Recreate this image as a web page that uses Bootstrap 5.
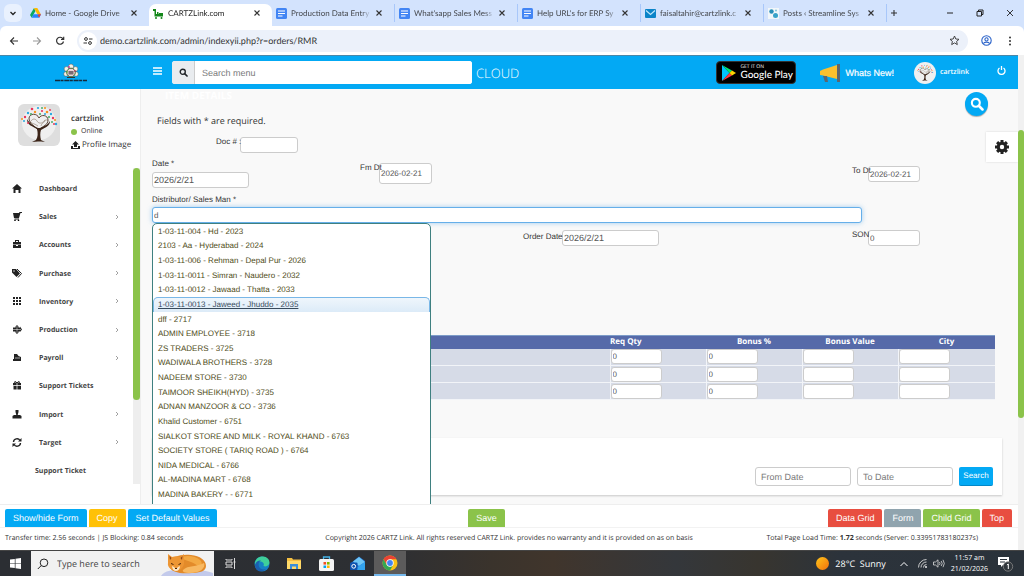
<!DOCTYPE html>
<html lang="en">
<head>
<meta charset="utf-8">
<meta name="viewport" content="width=device-width, initial-scale=1">
<title>CARTZLink.com</title>
<link href="https://cdn.jsdelivr.net/npm/bootstrap@5.3.0/dist/css/bootstrap.min.css" rel="stylesheet">
<style>
:root{--blue:#03a9f4;--green:#8bc34a;--red:#e84e40}
body{font-family:"Open Sans",sans-serif;font-size:8px;line-height:12px;color:#333;background:#fff;overflow:hidden;text-rendering:geometricPrecision}
input,button{text-rendering:inherit}
svg{display:block;flex:none}
a{color:inherit;text-decoration:none}
button{font-family:inherit}
.arial,.field,.act{font-family:"Liberation Sans",sans-serif}
/* browser chrome */
.tabstrip{height:26px;background:#d3e3fd;padding-left:4px;font-family:Lato,sans-serif}
.tab-menu{width:18px;height:18px;border:0;border-radius:6px;background:#e9f1fe;padding:0;margin-right:4px}
.tab{width:123px;height:18px;padding:0 11px 0 4px;color:#45484d}
.tab .ttl{white-space:nowrap;overflow:hidden;flex:1;min-width:0;-webkit-mask:linear-gradient(90deg,#000 88%,transparent)}
.tab.on{background:#fff;height:22px;border-radius:7px 7px 0 0;align-self:flex-end;padding-bottom:4px;color:#222}
.tab.sep{border-right:1px solid #a8c7fa}
.win-ctl{gap:22px;padding-right:10px}
.plain{border:0;background:none;padding:0;color:#333;line-height:1}
.toolbar{height:29px;background:#fff;border-radius:6px 6px 0 0;gap:13px;padding:0 9px}
.omni{height:22px;background:#ecf1fa;border-radius:11px;padding:0 8px 0 2px;margin-left:-1px}
.omni-ic{width:18px;height:18px;border-radius:50%;background:#fff;margin-right:3px}
.omni input{border:0;background:none;font-family:Lato,sans-serif;font-size:9px;color:#333;outline:0;padding:0}
/* header */
.app-head{height:34px;background:var(--blue);border-top:1px solid #4a87a8;color:#fff}
.brand-box{width:141px}
.menu-search{width:300px;height:23px;border-radius:3px;overflow:hidden;background:#fff}
.menu-search span{width:23px;background:#e9ecef;border-right:1px solid #ccc}
.menu-search input{border:0;outline:0;font-size:9px;padding:0 7px;color:#555}
::placeholder{color:#7a7a7a!important;opacity:1}
.cloud{font-size:13px;font-weight:300;line-height:18px}
.play{width:80px;height:23px;background:#000;border-radius:4px;border:1px solid #333}
.news{font-size:9px;-webkit-text-stroke:.2px #fff}
/* sidebar */
.side{width:141px;background:#fff;border-right:1px solid #eee}
.side-nav{height:310px;margin-top:25px}
.side-nav a{flex:1;padding:0 20px 0 12px;color:#444;font-weight:700;font-size:7px}
.side-nav svg{margin-bottom:3px}
.side-nav .lbl{margin-left:17px;flex:1}
.bar-track{background:#eee}
.bar-thumb{background:var(--green);border-radius:4px}
/* form */
.content-pane{background:#f9f9f9;padding:0 16px 9px 11px}
.field{height:16px;border:1px solid #ccc;border-radius:3px;background:#fff;color:#555;font-size:9px;padding:0 1px;outline:0;min-width:0}
.field.sm{font-size:8px}
.lab{font-family:"Liberation Sans",sans-serif;white-space:nowrap;line-height:14px;display:block;position:relative;z-index:1}
.date-row{display:grid;grid-template-columns:208px 1fr 150px;margin-top:4px}
.order-row{display:grid;grid-template-columns:371px 1fr 150px;margin-top:5px;height:18px}
.pair{display:flex;align-items:flex-start}
.pair .field{margin-top:2px}
.focus-field{border-color:#66afe9;box-shadow:0 0 5px rgba(102,175,233,.6);width:710px}
.suggest{position:absolute;top:100%;left:0;width:279px;height:300px;border:1px solid #3f8080;border-radius:5px 5px 0 0;background:#fff;z-index:3;margin:0}
.suggest ul{height:278px;list-style:none;margin:0;padding:0}
.suggest li{flex:1;min-height:0;display:flex;align-items:center;padding-left:4px;color:#4e4b17;border:1px solid transparent;border-bottom:0;white-space:nowrap;line-height:12px}
.suggest li.hot{border-color:#79b7e7;border-radius:5px 5px 0 0;background:linear-gradient(#eff6fc,#dcebf8);color:#374a5c;text-decoration:underline}
.grid-table{margin:89px 7px 0 0;table-layout:fixed;border-collapse:collapse}
.grid-table th{background:#566aa9;color:#fff;height:13px;padding:0;font-size:8px;line-height:12px;text-align:center;border-top:1px solid #7d9cc8}
.grid-table th.first{text-align:left}
.grid-table td{background:#d6dbe7;height:17px;padding:0;border-left:1px solid #f2f4f8;border-bottom:1px solid #f2f4f8;line-height:0;vertical-align:middle}
.grid-table .field{width:51px;height:15px;font-size:8px}
.filter{background:#fff;margin-top:38px;padding:29px 9px 9px;gap:6px;box-shadow:0 1px 2px rgba(0,0,0,.2)}
.filter .field{width:96px;height:19px;font-size:9px;padding:0 5px}
.act{border:0;color:#fff;font-size:9px;line-height:18px;height:18px;padding:0 8px;border-radius:2px 2px 0 0;white-space:nowrap}
.act.srch{font-size:8px;height:19px;border-radius:2px;padding:0 4px;width:34px;border-bottom:1px solid #0388c8}
.bl{background:var(--blue)}.ye{background:#ffc107}.gr{background:var(--green)}.gy{background:#90a4ae}.re{background:var(--red)}
.round-btn{position:absolute;right:30px;top:3px;width:23px;height:24px;border-radius:50%;background:var(--blue);border:0;padding:0;box-shadow:0 1px 1px rgba(0,0,0,.3)}
.gear-btn{position:absolute;right:0;top:43px;width:32px;height:30px;background:#fff;border:0;padding:0;box-shadow:0 0 2px rgba(0,0,0,.15)}
.actions{height:23px;border-top:1px solid #eee;gap:2px;padding:0 6px 0 5px}
.foot{height:23px;border-top:1px solid #f2f2f2;font-size:7px;padding:0 5px}
.third{flex:1 1 0;min-width:0}
/* taskbar */
.task{height:26px;background:linear-gradient(90deg,#2b2e33 0,#2d2f33 38%,#3a332c 48%,#40352c 54%,#34373b 66%,#38352f 74%,#2c333b 82%,#2a323a 100%);border-top:1px solid #444;color:#fff}
.task-search{width:183px;background:#f1f1f1;padding-left:6px;overflow:hidden}
.task-search input{border:0;background:none;outline:0;width:104px;font-size:9px;padding:0;color:#444}
.task-search input::placeholder{color:#444!important}
.tb{width:32px;border:0;background:none;padding:0;display:flex;align-items:center;justify-content:center;height:100%}
.tb.on{background:#5c5b5b;border-bottom:2px solid #76b9ed}
.tray{gap:6px;font-size:9px;padding-right:10px}
.clock{font-size:7px;line-height:11px}
</style>
</head>
<body class="vh-100 d-flex flex-column">
<svg width="0" height="0" class="position-absolute" aria-hidden="true">
  <symbol id="x" viewBox="0 0 8 8"><path d="M1.500 1.500l5 5M6.500 1.500l-5 5" stroke="#333" stroke-width="1.100"/></symbol>
  <symbol id="doc" viewBox="0 0 11 11"><rect width="11" height="11" rx="1.500" fill="#4285f4"/><path d="M2 3h7M2 5.500h7M2 8h4.500" stroke="#fff" stroke-width="1.200"/></symbol>
  <symbol id="mag" viewBox="0 0 12 12"><circle cx="5" cy="5" r="3.400" fill="none" stroke="currentColor" stroke-width="1.800"/><path d="M7.500 7.500l3.200 3.200" stroke="currentColor" stroke-width="2.200" stroke-linecap="round"/></symbol>
  <symbol id="chev" viewBox="0 0 6 6"><path d="M2 1l2 2-2 2" fill="none" stroke="#888" stroke-width=".8"/></symbol>
  <symbol id="tree" viewBox="0 0 42 42">
    <path d="M20 26C17 22 11 20 11 14c1-5 8-5 10 0 2-4 9-3 9 2 0 5-5 6-8 9" fill="none" stroke="#5a4434" stroke-width="1"/>
    <path d="M9 15c0 6 5 7 10 10 1 4 1 8-1 11l-4 2 6-.5h3l4 .5-4-2c-1-4-1-7 0-10 5-3 9-4 9-9-2 4-6 5-10 7h-2c-4-2-8-4-11-9z" fill="#3b2418"/>
    <path d="M13 17c2-3 5-2 6 0s4 3 6 1 4-3 5-1M20 22c-4-3-7-2-8-5M23 22c1-4 4-3 4-6" fill="none" stroke="#8a7768" stroke-width=".6"/>
    <g fill="#e9365b"><circle cx="7" cy="13" r="1.200"/><circle cx="14" cy="5" r="1.300"/><circle cx="24" cy="7" r="1.100"/><circle cx="35" cy="14" r="1.200"/><circle cx="10" cy="19" r="1"/><circle cx="32" cy="6" r="1"/><circle cx="36" cy="20" r="1"/></g>
    <g fill="#29a8e0"><circle cx="10" cy="9" r="1.200"/><circle cx="20" cy="4" r="1.100"/><circle cx="33" cy="10" r="1.200"/><circle cx="38" cy="20" r="1.200"/><circle cx="6" cy="17" r="1"/><circle cx="27" cy="10" r="1"/></g>
    <g fill="#f7941d"><circle cx="17" cy="8" r="1.200"/><circle cx="29" cy="8" r="1.300"/><circle cx="37" cy="16" r="1.100"/><circle cx="4" cy="15" r="1"/><circle cx="27" cy="4" r="1.100"/></g>
    <g fill="#4caf6d"><circle cx="13" cy="10" r="1.100"/><circle cx="22" cy="10" r="1.100"/><circle cx="31" cy="13" r="1.100"/><circle cx="34" cy="18" r="1"/><circle cx="24" cy="4" r="1"/></g>
  </symbol>
</svg>

<!-- browser tabs -->
<div class="tabstrip d-flex align-items-center flex-shrink-0">
  <button class="tab-menu d-flex align-items-center justify-content-center" aria-label="Tabs"><svg width="8" height="8"><path d="M1.500 3L4 5.500 6.500 3" fill="none" stroke="#222" stroke-width="1.300"/></svg></button>
  <div class="tab d-flex align-items-center gap-1"><svg width="11" height="10" viewBox="0 0 11 10"><path d="M4 0L0 7l1.700 2.800L5.500 3z" fill="#0da960"/><path d="M4 0h3.300l3.500 6.300H7.300z" fill="#ffba00"/><path d="M3.500 6.300H11L9.200 9.800H1.700z" fill="#2684fc"/><path d="M9 6.300h2L9.200 9.800 7.500 7z" fill="#ea4335"/></svg><span class="ttl">Home - Google Drive</span><button class="plain" aria-label="Close"><svg width="8" height="8"><use href="#x"/></svg></button></div>
  <div class="tab on d-flex align-items-center gap-1"><svg width="11" height="11" viewBox="0 0 11 11"><path d="M0 1h3v5h7v2.500H1.500V3H0z" fill="#14871b"/><path d="M4 4h1.500v2H4zM6 5h4v2H6z" fill="#14871b"/><circle cx="3" cy="10" r="1" fill="#14871b"/><circle cx="8.500" cy="10" r="1" fill="#14871b"/></svg><span class="ttl">CARTZLink.com</span><button class="plain" aria-label="Close"><svg width="8" height="8"><use href="#x"/></svg></button></div>
  <div class="tab sep d-flex align-items-center gap-1"><svg width="11" height="11"><use href="#doc"/></svg><span class="ttl">Production Data Entry</span><button class="plain" aria-label="Close"><svg width="8" height="8"><use href="#x"/></svg></button></div>
  <div class="tab sep d-flex align-items-center gap-1"><svg width="11" height="11"><use href="#doc"/></svg><span class="ttl">What'sapp Sales Mess</span><button class="plain" aria-label="Close"><svg width="8" height="8"><use href="#x"/></svg></button></div>
  <div class="tab sep d-flex align-items-center gap-1"><svg width="11" height="11"><use href="#doc"/></svg><span class="ttl">Help URL's for ERP Sy</span><button class="plain" aria-label="Close"><svg width="8" height="8"><use href="#x"/></svg></button></div>
  <div class="tab sep d-flex align-items-center gap-1"><svg width="11" height="9"><rect width="11" height="9" rx="1" fill="#0b84c8"/><path d="M1 1.500l4.500 4 4.500-4" fill="none" stroke="#bfe6fa" stroke-width="1.200"/></svg><span class="ttl">faisaltahir@cartzlink.c</span><button class="plain" aria-label="Close"><svg width="8" height="8"><use href="#x"/></svg></button></div>
  <div class="tab sep d-flex align-items-center gap-1"><svg width="11" height="11"><rect width="11" height="11" fill="#f2f7fa"/><circle cx="3.500" cy="3.500" r="2.200" fill="#2a8fb8"/><circle cx="7.500" cy="7.500" r="2.500" fill="#39a3c9"/><circle cx="8" cy="2.500" r="1" fill="#7fc4dc"/></svg><span class="ttl">Posts ‹ Streamline Sys</span><button class="plain" aria-label="Close"><svg width="8" height="8"><use href="#x"/></svg></button></div>
  <button class="plain" aria-label="New tab"><svg width="10" height="10" class="ms-1"><path d="M3 2v6M0 5h6" stroke="#333" stroke-width="1.100"/></svg></button>
  <div class="win-ctl d-flex ms-auto align-items-center">
    <button class="plain" aria-label="Minimize"><svg width="8" height="8"><path d="M1 4h6" stroke="#222" stroke-width="1"/></svg></button>
    <button class="plain" aria-label="Restore"><svg width="8" height="8"><path d="M1 2.500h4.500V7H1zM2.500 2.500V1H7v4.500H5.500" fill="none" stroke="#222"/></svg></button>
    <button class="plain" aria-label="Close window"><svg width="8" height="8"><path d="M1 1l6 6M7 1L1 7" stroke="#222" stroke-width=".9"/></svg></button>
  </div>
</div>
<div style="background:#d3e3fd" class="flex-shrink-0">
<div class="toolbar d-flex align-items-center">
  <button class="plain" aria-label="Back"><svg width="10" height="10"><path d="M9 5H1.500M5 1.500L1.500 5 5 8.500" fill="none" stroke="#333" stroke-width="1.100"/></svg></button>
  <button class="plain" aria-label="Forward"><svg width="10" height="10"><path d="M1 5h7.500M5 1.500L8.500 5 5 8.500" fill="none" stroke="#999" stroke-width="1.100"/></svg></button>
  <button class="plain" aria-label="Reload"><svg width="10" height="10"><path d="M8 2.800A3.500 3.500 0 1 0 8.500 5.500M8.700.8v2.700H6" fill="none" stroke="#333" stroke-width="1.200"/></svg></button>
  <form class="omni d-flex align-items-center flex-grow-1">
    <span class="omni-ic d-flex align-items-center justify-content-center"><svg width="10" height="10"><path d="M6 3h3.500M.5 7H4" stroke="#333" stroke-width="1.200"/><circle cx="3" cy="3" r="1.400" fill="none" stroke="#333"/><circle cx="7" cy="7" r="1.400" fill="none" stroke="#333"/></svg></span>
    <input class="flex-grow-1" type="text" aria-label="Address" value="demo.cartzlink.com/admin/indexyii.php?r=orders/RMR">
    <svg width="11" height="11"><path d="M5.500 1l1.300 3 3.200.3-2.400 2.100.7 3.200-2.800-1.700-2.800 1.700.7-3.200L1 4.300 4.200 4z" fill="none" stroke="#333" stroke-width=".9"/></svg>
  </form>
  <button class="plain" aria-label="Profile"><svg width="11" height="11"><g fill="none" stroke="#2a62c9" stroke-width="1.100"><circle cx="5.500" cy="5.500" r="4.700"/><circle cx="5.500" cy="4.400" r="1.600"/><path d="M2.400 8.600c1-2 5.200-2 6.200 0"/></g></svg></button>
  <button class="plain" aria-label="Menu"><svg width="10" height="10"><g fill="#333"><circle cx="5" cy="1.500" r="1"/><circle cx="5" cy="5" r="1"/><circle cx="5" cy="8.500" r="1"/></g></svg></button>
</div>
</div>

<!-- application -->
<div class="d-flex flex-grow-1" style="min-height:0">
<div class="d-flex flex-column flex-grow-1" style="min-width:0">
  <header class="app-head d-flex align-items-center flex-shrink-0">
    <div class="brand-box d-flex justify-content-center">
      <svg width="34" height="20" viewBox="0 0 34 20" role="img" aria-label="Logo"><g fill="#f4f4e8" stroke="#555" stroke-width=".5"><circle cx="17" cy="3.500" r="2.500"/><circle cx="12.500" cy="6" r="2.400"/><circle cx="21.500" cy="6" r="2.400"/><circle cx="12" cy="11" r="2.300"/><circle cx="22" cy="11" r="2.300"/></g><circle cx="17" cy="9.500" r="4.300" fill="#ead6dc" stroke="#486b33" stroke-width="1"/><path d="M14.500 8h5v3.500h-5z" fill="#7b6a73"/><circle cx="15" cy="4" r=".9" fill="#d0339c"/><circle cx="13" cy="9" r=".8" fill="#4caf30"/><circle cx="21" cy="8" r=".8" fill="#c2185b"/><path d="M13 14.500h8" stroke="#333"/><path d="M1 17.500h32" stroke="#142a3c" stroke-width="1.700" stroke-dasharray="5 .5 3 .8"/></svg>
    </div>
    <button class="plain ms-2 ps-1 pb-1" aria-label="Toggle menu"><svg width="9" height="8"><path d="M0 1h9M0 4h9M0 7h9" stroke="#fff" stroke-width="1.300"/></svg></button>
    <form class="menu-search d-flex" style="margin-left:10px"><span class="d-flex align-items-center justify-content-center text-dark"><svg width="9" height="9"><use href="#mag"/></svg></span><input class="arial flex-grow-1" type="search" placeholder="Search menu" aria-label="Search menu"></form>
    <span class="cloud ms-1">CLOUD</span>
    <a href="#" class="play d-flex align-items-center ms-auto ps-1 gap-1 text-white">
      <svg width="15" height="16" viewBox="0 0 15 16"><path d="M1 0v16l7.500-8z" fill="#00c3ff"/><path d="M1 0l10 5.500L8.500 8z" fill="#00e676"/><path d="M1 16l10-5.500L8.500 8z" fill="#ff3a44"/><path d="M11 5.500L15 8l-4 2.500L8.500 8z" fill="#ffd500"/></svg>
      <span class="d-flex flex-column"><span style="font-size:5px;line-height:6px">GET IT ON</span><span style="font:500 10px/11px Lato,sans-serif">Google Play</span></span>
    </a>
    <a href="#" class="news d-flex align-items-center arial text-white gap-1 ms-4"><svg width="21" height="20" viewBox="0 0 21 20"><path d="M0 8l3-1.500L17 2v14L3 12.500 0 12z" fill="#fbc02d"/><path d="M17 1h3v18h-3z" fill="#5b6670"/><path d="M3 13h4l1 6H5z" fill="#5b6670"/></svg>Whats New!</a>
    <a href="#" class="d-flex align-items-center text-white gap-1" style="font-weight:600;font-size:7px;margin-left:20px"><svg width="22" height="22" viewBox="0 0 42 42"><circle cx="21" cy="21" r="21" fill="#f0f0f0"/><use href="#tree" x="3" y="2" width="36" height="38"/></svg>cartzlink</a>
    <button class="plain ms-4 me-2 ps-1 pe-1 pb-1" aria-label="Log out"><svg width="9" height="9"><path d="M2.500 2A3.500 3.500 0 1 0 6.500 2M4.500 0v4" fill="none" stroke="#fff" stroke-width="1.300"/></svg></button>
  </header>

  <div class="d-flex flex-grow-1 overflow-hidden" style="min-height:0">
    <aside class="side position-relative flex-shrink-0 overflow-hidden">
      <div class="d-flex" style="padding:15px 0 0 18px">
        <svg width="42" height="42" viewBox="0 0 42 42"><rect width="42" height="42" rx="6" fill="#dedede"/><circle cx="21" cy="19" r="17" fill="#efefef"/><use href="#tree"/></svg>
        <div class="ms-2" style="padding:8px 0 0 3px;line-height:13px;white-space:nowrap">
          <div style="font-weight:600">cartzlink</div>
          <div class="d-flex align-items-center" style="font-size:7px"><svg width="6" height="6" class="me-1"><circle cx="3" cy="3" r="3" fill="#8bc34a"/></svg>Online</div>
          <a href="#" class="d-flex align-items-center" style="gap:2px"><svg width="9" height="8"><path d="M4.500 0L8 3.500H6V6H3V3.500H1zM0 5h2v2h5V5h2v3H0z" fill="#222"/></svg>Profile Image</a>
        </div>
      </div>
      <nav class="side-nav d-flex flex-column">
        <a href="#" class="d-flex align-items-center"><svg width="10" height="9"><path d="M5 0l5 4.500H8.500V9h-2V6h-3v3h-2V4.500H0z" fill="#222"/></svg><span class="lbl">Dashboard</span></a>
        <a href="#" class="d-flex align-items-center"><svg width="10" height="9"><path d="M1 1h6l.5-1H10v1H8.500L7 6H2zM2.500 6.500H7v1h-4.500z" fill="#222"/><circle cx="3" cy="8.300" r=".8"/><circle cx="6.500" cy="8.300" r=".8"/></svg><span class="lbl">Sales</span><svg width="6" height="6"><use href="#chev"/></svg></a>
        <a href="#" class="d-flex align-items-center"><svg width="10" height="9"><path d="M3 0h4v2h2v2.500H1V2h2zm1 1v1h2V1zM1 5h3v1h2V5h3v3H1z" fill="#222" fill-rule="evenodd"/></svg><span class="lbl">Accounts</span><svg width="6" height="6"><use href="#chev"/></svg></a>
        <a href="#" class="d-flex align-items-center"><svg width="10" height="9"><path d="M0 0h4l4 4.500L4.500 8 0 3.500z" fill="#222"/><path d="M5 0l4.500 4.500L6 8.500" fill="none" stroke="#222"/><circle cx="2" cy="2" r=".7" fill="#fff"/></svg><span class="lbl">Purchase</span><svg width="6" height="6"><use href="#chev"/></svg></a>
        <a href="#" class="d-flex align-items-center"><svg width="10" height="9"><path d="M1 0h2v2H1zm3 0h2v2H4zm3 0h2v2H7zM1 3h2v2H1zm3 0h2v2H4zm3 0h2v2H7zM1 6h2v2H1zm3 0h2v2H4zm3 0h2v2H7z" fill="#222"/></svg><span class="lbl">Inventory</span><svg width="6" height="6"><use href="#chev"/></svg></a>
        <a href="#" class="d-flex align-items-center"><svg width="10" height="9"><path d="M5 0l1.500 1.500V2.500H8V1.500L10 4.500 8 7V6.500H6.500v1L5 9 3.500 7.500v-1H1v-4h2.500v-1z" fill="#222"/><path d="M1 4.500h8M5 1v7" stroke="#fff" stroke-width=".5"/></svg><span class="lbl">Production</span><svg width="6" height="6"><use href="#chev"/></svg></a>
        <a href="#" class="d-flex align-items-center"><svg width="10" height="9"><path d="M2 1h3l1.500 2L9 4v4H1V6h1z" fill="#222"/><path d="M3 5h5" stroke="#fff" stroke-width=".6"/></svg><span class="lbl">Payroll</span><svg width="6" height="6"><use href="#chev"/></svg></a>
        <a href="#" class="d-flex align-items-center"><svg width="10" height="9"><path d="M1 2h8v2.200H1zM1.500 5H9v3.500H1.500z" fill="#222"/><path d="M5 2C3-1 1.500 1.500 3 2h4C8.500 1.500 7-1 5 2z" fill="none" stroke="#222"/><path d="M5 2v7" stroke="#fff" stroke-width=".7"/></svg><span class="lbl">Support Tickets</span></a>
        <a href="#" class="d-flex align-items-center"><svg width="10" height="9"><path d="M3.500 0h3v2l-.8 3H8L9.500 6v2.500h-9V6L2 5h2.300l-.8-3z" fill="#222"/></svg><span class="lbl">Import</span><svg width="6" height="6"><use href="#chev"/></svg></a>
        <a href="#" class="d-flex align-items-center"><svg width="10" height="9"><path d="M1.500 4A3.500 3.500 0 0 1 8 2.500M8.500 5A3.500 3.500 0 0 1 2 6.500" fill="none" stroke="#222" stroke-width="1.400"/><path d="M9.500 0v3.500H6zM.5 9V5.500H4z" fill="#222"/></svg><span class="lbl">Target</span><svg width="6" height="6"><use href="#chev"/></svg></a>
        <a href="#" class="d-flex align-items-center" style="padding-left:35px">Support Ticket</a>
      </nav>
      <div class="bar-track position-absolute end-0" style="top:79px;width:7px;height:316px"><div class="bar-thumb" style="height:232px"></div></div>
    </aside>

    <main class="content-pane position-relative flex-grow-1" style="min-width:0">
      <h1 class="text-white fw-bold m-0" style="font-size:10px;line-height:13px;padding-left:13px">ITEM DETAILS</h1>
      <p class="mb-0" style="font-size:9px;line-height:14px;margin:12px 0 0 5px">Fields with * are required.</p>
      <div class="pair" style="margin:7px 0 0 64px"><label class="lab" for="docno" style="width:24px">Doc # :</label><input id="docno" class="field" style="width:58px"></div>
      <div class="date-row">
        <div><label class="lab" for="dt">Date *</label><input id="dt" class="field d-block" style="width:97px;margin-top:1px" value="2026/2/21"></div>
        <div class="pair pt-1"><label class="lab" for="fm" style="width:19px">Fm Dt</label><input id="fm" class="field sm" style="width:53px;height:21px" value="2026-02-21"></div>
        <div class="pair" style="padding-top:7px"><label class="lab" for="to" style="width:16px">To Dt</label><input id="to" class="field sm" style="width:52px" value="2026-02-21"></div>
      </div>
      <div class="position-relative" style="margin-top:5px">
        <label class="lab" for="dist">Distributor/ Sales Man *</label>
        <input id="dist" class="field sm focus-field d-block" value="d">
        <div class="suggest arial">
          <ul class="d-flex flex-column">
            <li>1-03-11-004 - Hd - 2023</li><li>2103 - Aa - Hyderabad - 2024</li><li>1-03-11-006 - Rehman - Depal Pur - 2026</li><li>1-03-11-0011 - Simran - Naudero - 2032</li><li>1-03-11-0012 - Jawaad - Thatta - 2033</li><li class="hot">1-03-11-0013 - Jaweed - Jhuddo - 2035</li><li>dff - 2717</li><li>ADMIN EMPLOYEE - 3718</li><li>ZS TRADERS - 3725</li><li>WADIWALA BROTHERS - 3728</li><li>NADEEM STORE - 3730</li><li>TAIMOOR SHEIKH(HYD) - 3735</li><li>ADNAN MANZOOR &amp; CO - 3736</li><li>Khalid Customer - 6751</li><li>SIALKOT STORE AND MILK - ROYAL KHAND - 6763</li><li>SOCIETY STORE ( TARIQ ROAD ) - 6764</li><li>NIDA MEDICAL - 6766</li><li>AL-MADINA MART - 6768</li><li>MADINA BAKERY - - 6771</li>
          </ul>
        </div>
      </div>
      <div class="order-row">
        <div></div>
        <div class="pair"><label class="lab" for="od" style="width:39px;margin-top:2px">Order Date</label><input id="od" class="field" style="width:97px" value="2026/2/21"></div>
        <div class="pair"><label class="lab" for="son" style="width:16px">SON</label><input id="son" class="field sm" style="width:52px" value="0"></div>
      </div>
      <table class="grid-table" style="width:calc(100% - 7px)">
        <colgroup><col><col style="width:96px"><col style="width:96px"><col style="width:96px"><col style="width:97px"></colgroup>
        <thead><tr><th></th><th class="first">Req Qty</th><th>Bonus %</th><th>Bonus Value</th><th>City</th></tr></thead>
        <tbody>
          <tr><td></td><td><input class="field" aria-label="Req Qty" value="0"></td><td><input class="field" aria-label="Bonus %" value="0"></td><td><input class="field" aria-label="Bonus Value"></td><td><input class="field" aria-label="City"></td></tr>
          <tr><td></td><td><input class="field" aria-label="Req Qty" value="0"></td><td><input class="field" aria-label="Bonus %" value="0"></td><td><input class="field" aria-label="Bonus Value"></td><td><input class="field" aria-label="City"></td></tr>
          <tr><td></td><td><input class="field" aria-label="Req Qty" value="0"></td><td><input class="field" aria-label="Bonus %" value="0"></td><td><input class="field" aria-label="Bonus Value"></td><td><input class="field" aria-label="City"></td></tr>
        </tbody>
      </table>
      <form class="filter d-flex justify-content-end">
        <input class="field" placeholder="From Date" aria-label="From Date"><input class="field" placeholder="To Date" aria-label="To Date"><button type="button" class="act srch bl">Search</button>
      </form>
      <button class="round-btn d-flex align-items-center justify-content-center text-white" aria-label="Search"><svg width="14" height="14"><use href="#mag"/></svg></button>
      <button class="gear-btn d-flex align-items-center justify-content-center" aria-label="Settings"><svg width="14" height="14" viewBox="-7 -7 14 14"><circle r="3.700" fill="none" stroke="#222" stroke-width="3"/><path d="M0-7V-4M0 7V4M-7 0h3M7 0H4M-4.900-4.900l2 2M4.900 4.900l-2-2M-4.900 4.900l2-2M4.900-4.900l-2 2" stroke="#222" stroke-width="3"/></svg></button>
    </main>
  </div>

  <div class="actions d-flex align-items-end flex-shrink-0 bg-white">
    <div class="third d-flex" style="gap:2px"><button class="act bl">Show/hide Form</button><button class="act ye">Copy</button><button class="act bl">Set Default Values</button></div>
    <button class="act gr">Save</button>
    <div class="third d-flex justify-content-end" style="gap:2px;margin-left:44px"><button class="act re">Data Grid</button><button class="act gy">Form</button><button class="act gr">Child Grid</button><button class="act re">Top</button></div>
  </div>
  <footer class="foot d-flex align-items-center justify-content-between flex-shrink-0 bg-white">
    <span class="third">Transfer time: 2.56 seconds | JS Blocking: 0.84 seconds</span>
    <span>Copyright 2026 CARTZ Link. All rights reserved CARTZ Link. provides no warranty and it is provided on as on basis</span>
    <span class="third text-end"><span class="d-block" style="padding-right:35px">Total Page Load Time: <b>1.72</b> seconds (Server: 0.33951783180237s)</span></span>
  </footer>
</div>
<div class="bar-track flex-shrink-0" style="width:6px;padding-top:75px;background:#f1f1f1"><div class="bar-thumb" style="height:288px"></div></div>
</div>

<!-- desktop taskbar -->
<div class="task d-flex align-items-center flex-shrink-0">
  <button class="tb" aria-label="Start" style="width:31px"><svg width="11" height="11"><path d="M0 1.500L4.800 1v4.200H0zM5.500.8L11 0v5.200H5.500zM0 5.800h4.800V10L0 9.500zM5.500 5.800H11V11l-5.500-.8z" fill="#fff"/></svg></button>
  <div class="task-search d-flex align-items-center h-100">
    <svg width="12" height="12" class="me-1"><circle cx="7" cy="4.800" r="3.800" fill="none" stroke="#222"/><path d="M4.300 7.500L.8 11" stroke="#222"/></svg>
    <input class="ms-1" type="search" placeholder="Type here to search" aria-label="Type here to search">
    <svg width="52" height="25" viewBox="0 0 52 25"><path d="M0 25c3-5 12-7 24-7s22 2 28 4v3z" fill="#c3caeb"/><path d="M8 14C10 5 20 3 30 4c9 1 15 5 15 11 0 5-6 7-14 7-10 1-22 0-23-8z" fill="#e38b2a"/><path d="M17 7c6-3 17-3 22 2 3 3 2 6-1 7-5-5-13-7-21-9z" fill="#f3a943"/><path d="M22 19c5-5 14-3 21-7 2 5-4 10-14 10-5 0-8-1-7-3z" fill="#f8b962"/><path d="M7 3l4 3c3-1 5-1 8 0l4-3v9c0 4-4 8-8 8s-9-4-8-8z" fill="#ed9634"/><path d="M8.500 5l2 2-1.500 2zM21.500 5l-2 2 1.500 2z" fill="#8c4516"/><path d="M11 15l2 1 2 2 2-2 2-1c0 3-2 5-4 5s-4-2-4-5z" fill="#fde6c3"/><path d="M10 12.500l2.500 1M20 12.500l-2.500 1M14 17.500h2" stroke="#4a250b" stroke-width="1"/></svg>
  </div>
  <button class="tb" aria-label="Task view"><svg width="11" height="11"><path d="M1 1v1h6V1M1 4h6v3H1zM1 10V9h6v1M9.500 0v11M8.500 4h2" fill="none" stroke="#ddd"/></svg></button>
  <button class="tb" aria-label="Edge"><svg width="16" height="16"><circle cx="8" cy="8" r="7.500" fill="#1681c4"/><path d="M1 6.500C2 2 6 .5 9 .6c4 .2 6.500 3 6.500 6 0 3-3 4.500-6 3.500 1-2 0-4-2.500-4.500S2 6 1 9z" fill="#3fcf9a"/><path d="M1 9c1-4 4-5 6-4.500-2 1-3 3-2 6 1 2.500 4 3.500 7 2.500-3 3.500-11 3.500-11-4z" fill="#1b5fae"/></svg></button>
  <button class="tb" aria-label="File Explorer"><svg width="14" height="13"><path d="M0 1h5l1 1.500h8V12H0z" fill="#f5c042"/><path d="M0 4h14v8H0z" fill="#ffd968"/><path d="M3 7h8v5H9V9.500H5V12H3z" fill="#3a8ed8"/></svg></button>
  <button class="tb" aria-label="Store"><svg width="15" height="15"><path d="M4.500 4V1h6v3" fill="none" stroke="#46b4e8" stroke-width="1.300"/><rect y="3" width="15" height="12" rx="1.500" fill="#f4f4f4"/><path d="M4.500 6h2.600v2.600H4.500z" fill="#f25022"/><path d="M8 6h2.600v2.600H8z" fill="#7fba00"/><path d="M4.500 9.500h2.600V12H4.500z" fill="#00a4ef"/><path d="M8 9.500h2.600V12H8z" fill="#ffb900"/></svg></button>
  <button class="tb" aria-label="Outlook"><svg width="16" height="15"><path d="M1 7l8-6.500L15 5v9H3z" fill="#1f6fd0"/><path d="M3 5.500L9 1l6 5-6 4z" fill="#6fc6f5"/><path d="M3 14l12-8v8z" fill="#33a3ee"/><rect y="6.500" width="7.500" height="7.500" rx="1" fill="#0f52ad"/><circle cx="3.700" cy="10.300" r="1.900" fill="none" stroke="#fff"/></svg></button>
  <button class="tb on" aria-label="Chrome"><svg width="16" height="16" viewBox="-8 -8 16 16"><circle r="7.500" fill="#fbc116"/><path d="M-6.500-3.700A7.500 7.500 0 0 1 6.500-3.700H0L-3.300 1.800z" fill="#ea4335"/><path d="M-6.500-3.700L-3.200 2 0 3.700 3.300 1.800 0 7.500A7.500 7.500 0 0 1-6.500-3.700z" fill="#34a853"/><circle r="3.700" fill="#fff"/><circle r="2.900" fill="#4285f4"/></svg></button>
  <div class="tray ms-auto d-flex align-items-center">
    <svg width="13" height="13"><defs><linearGradient id="sun" x1="0" y1="0" x2="1" y2="1"><stop stop-color="#ffc61a"/><stop offset="1" stop-color="#f2700c"/></linearGradient></defs><circle cx="6.500" cy="6.500" r="6.500" fill="url(#sun)"/></svg>
    <span class="me-2">28°C&nbsp; Sunny</span>
    <svg width="8" height="6" class="me-1"><path d="M.5 5L4 1.500 7.500 5" fill="none" stroke="#fff"/></svg>
    <svg width="9" height="9"><g fill="none" stroke="#ddd" stroke-width=".9"><path d="M.5 8.500a8 8 0 0 1 8-8M3 8.500A5.500 5.500 0 0 1 8.500 3M5.500 8.500a3 3 0 0 1 3-3"/></g><circle cx="8" cy="8" r=".9" fill="#fff"/></svg>
    <svg width="12" height="9"><path d="M.5 3h2L5 .8v7.400L2.500 6h-2zM6.500 3q1 1.500 0 3M8.200 2q2 2.500 0 5M10 .8q2.600 3.700 0 7.400" fill="none" stroke="#ddd" stroke-width=".8"/></svg>
    <span class="clock text-center">11:57 am<br>21/02/2026</span>
    <button class="plain ms-1" aria-label="Notifications"><svg width="16" height="16"><path d="M0 1h11v8H5L3 11V9H0z" fill="#fff"/><path d="M2 3.500h7M2 6h5" stroke="#2a323a"/><circle cx="10" cy="10.500" r="4.700" fill="#30363c" stroke="#888" stroke-width=".8"/><path d="M8.900 9l1.400-1v5" fill="none" stroke="#fff"/></svg></button>
  </div>
</div>
<script src="https://cdn.jsdelivr.net/npm/bootstrap@5.3.0/dist/js/bootstrap.bundle.min.js"></script>
</body>
</html>
